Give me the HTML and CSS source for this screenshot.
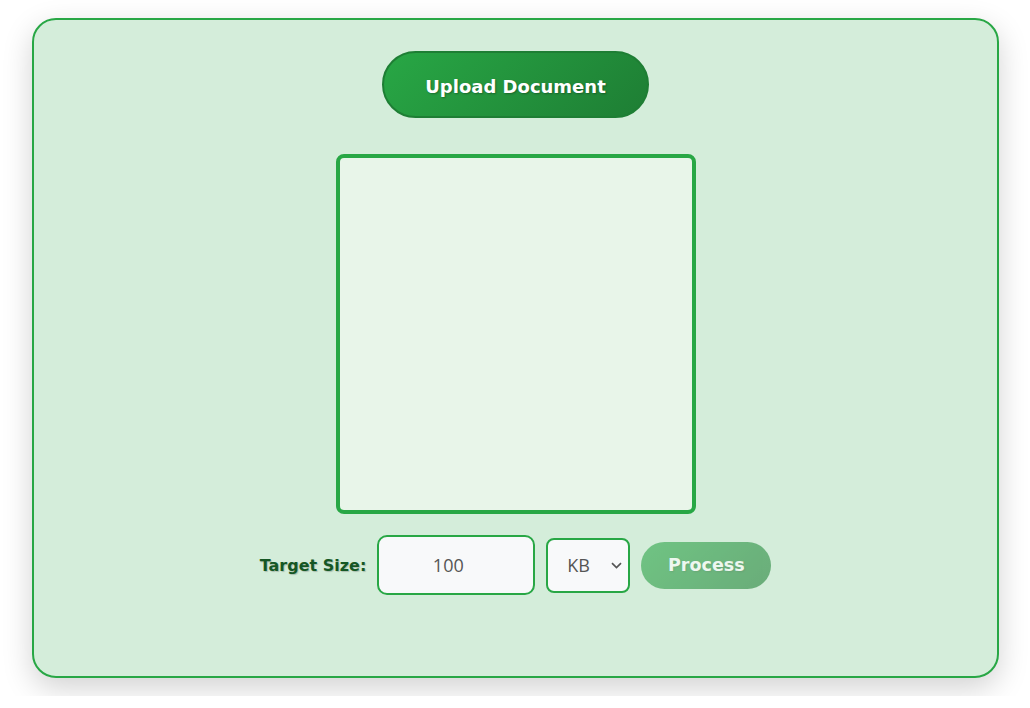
FILE: index.html
```html
<!DOCTYPE html>
<html lang="en">
<head>
<meta charset="utf-8">
<title>Document Resizer</title>
<link rel="stylesheet" href="styles.css">
</head>
<body>
<div class="card">
  <button class="upload-btn">Upload Document</button>
  <div class="preview"></div>
  <div class="controls">
    <label class="target-label" for="size">Target Size:</label>
    <input id="size" class="size-input" type="text" value="100">
    <select class="unit-select">
      <option>KB</option>
      <option>MB</option>
    </select>
    <button class="process-btn" disabled>Process</button>
  </div>
</div>
</body>
</html>
```
FILE: styles.css
```css
html, body {
  margin: 0;
  padding: 0;
  background: #ffffff;
}
body {
  padding: 18px 32px;
  font-family: "DejaVu Sans", Verdana, sans-serif;
}
.card {
  box-sizing: border-box;
  width: 967px;
  height: 660px;
  border: 2px solid #28a745;
  border-radius: 24px;
  background: #d4edda;
  box-shadow: 0 10px 30px rgba(0, 0, 0, 0.18);
  display: flex;
  flex-direction: column;
  align-items: center;
  padding-top: 31px;
}
.upload-btn {
  box-sizing: border-box;
  width: 267px;
  height: 67px;
  border: 2px solid #1e7e34;
  border-radius: 34px;
  background: linear-gradient(135deg, #28a745, #1e7e34);
  color: #ffffff;
  font-family: "DejaVu Sans", Verdana, sans-serif;
  font-weight: bold;
  font-size: 18px;
  padding: 4px 0 0;
  text-shadow: 1px 1px 2px rgba(0, 0, 0, 0.3);
  cursor: pointer;
}
.preview {
  box-sizing: border-box;
  width: 360px;
  height: 360px;
  margin-top: 36px;
  border: 4px solid #28a745;
  border-radius: 8px;
  background: #e8f5e9;
}
.controls {
  display: flex;
  align-items: center;
  gap: 11px;
  margin-top: 21px;
}
.target-label {
  font-family: "DejaVu Sans", Verdana, sans-serif;
  font-weight: bold;
  font-size: 16px;
  color: #155724;
  text-shadow: 1px 1px 1px rgba(0, 0, 0, 0.2);
}
.size-input {
  box-sizing: border-box;
  width: 158px;
  height: 60px;
  border: 2px solid #28a745;
  border-radius: 10px;
  background: #f8f9fa;
  text-align: center;
  font-family: "Open Sans", "Noto Sans", sans-serif;
  font-size: 18px;
  color: #555555;
  padding: 0 16px 0 0;
  outline: none;
}
.unit-select {
  box-sizing: border-box;
  width: 84px;
  height: 55px;
  border: 2px solid #28a745;
  border-radius: 8px;
  -webkit-appearance: none;
  appearance: none;
  background-color: #f8f9fa;
  background-image: url("data:image/svg+xml,%3Csvg xmlns='http://www.w3.org/2000/svg' width='11' height='7' viewBox='0 0 11 7'%3E%3Cpath d='M1 1.2l4.5 4.3 4.5-4.3' fill='none' stroke='%23555555' stroke-width='1.7'/%3E%3C/svg%3E");
  background-repeat: no-repeat;
  background-position: right 6px center;
  font-family: "Open Sans", "Noto Sans", sans-serif;
  font-size: 18px;
  color: #555555;
  padding: 0 0 0 19px;
}
.process-btn {
  box-sizing: border-box;
  width: 130px;
  height: 47px;
  border: none;
  border-radius: 24px;
  background: linear-gradient(135deg, #28a745, #1e7e34);
  color: #ffffff;
  font-family: "DejaVu Sans", Verdana, sans-serif;
  font-weight: bold;
  font-size: 17.5px;
  opacity: 0.58;
  text-shadow: 1px 1px 2px rgba(0, 0, 0, 0.2);
}
```
